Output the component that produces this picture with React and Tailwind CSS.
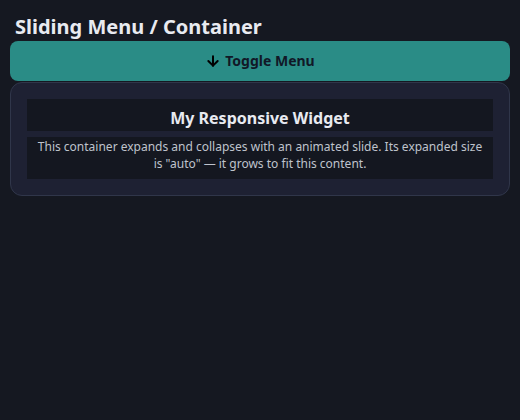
import { ArrowDown } from "lucide-react";

const App = () => (
  <div className="min-h-[420px] bg-[#151821] px-2.5 pt-[13px] font-['Noto_Sans',sans-serif]">
    <h1 className="px-[5px] text-[20px] font-bold leading-[28px] text-[#e8eaf0]">
      Sliding Menu / Container
    </h1>
    <button className="flex h-10 w-full items-center justify-center gap-[4px] rounded-lg bg-[#2a8c86] text-sm font-bold text-[#111827]">
      <ArrowDown size={16} strokeWidth={3} className="text-black" />
      Toggle Menu
    </button>
    <div className="mt-px rounded-xl border border-[#30364a] bg-[#1e2133] p-4">
      <div className="h-8 bg-[#141720] pt-[7px] text-center">
        <h2 className="text-base font-bold leading-6 text-[#e8eaf0]">My Responsive Widget</h2>
      </div>
      <div className="mt-1.5 h-[42px] bg-[#141720] px-2 pt-[2px]">
        <p className="text-center text-[12px] leading-[16.5px] text-[#bfc3cc]">
          This container expands and collapses with an animated slide. Its expanded size
          is "auto" — it grows to fit this content.
        </p>
      </div>
    </div>
  </div>
);

export default App;
